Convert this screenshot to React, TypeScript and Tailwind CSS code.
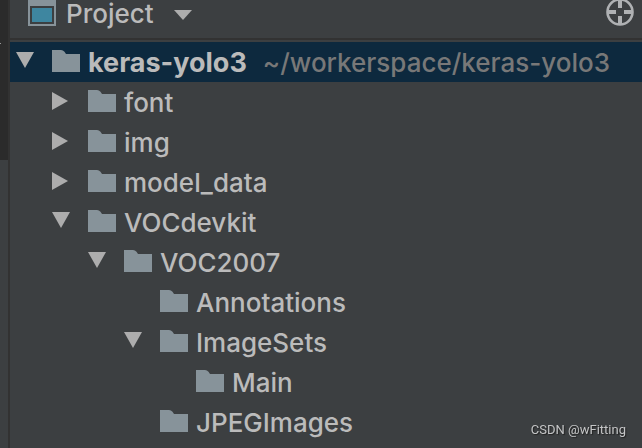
import { useState } from "react";

type Node = { name: string; path?: string; open?: boolean; children?: Node[] };

const tree: Node = {
  name: "keras-yolo3",
  path: "~/workerspace/keras-yolo3",
  open: true,
  children: [
    { name: "font", children: [] },
    { name: "img", children: [] },
    { name: "model_data", children: [] },
    {
      name: "VOCdevkit",
      open: true,
      children: [
        {
          name: "VOC2007",
          open: true,
          children: [
            { name: "Annotations" },
            { name: "ImageSets", open: true, children: [{ name: "Main" }] },
            { name: "JPEGImages" },
          ],
        },
      ],
    },
  ],
};

function Arrow({ open }: { open: boolean }) {
  return (
    <svg className="h-6 w-6" viewBox="0 0 24 24" fill="#adadad" aria-hidden="true">
      {open ? <path d="M0 4h18L9 20z" /> : <path d="M0 4v18l16-9z" />}
    </svg>
  );
}

function Folder() {
  return (
    <svg className="h-6 w-7 shrink-0" viewBox="0 0 28 24" fill="#87939a" aria-hidden="true">
      <path d="M0 2h9q2 0 3.500 1.800L14 6h14v18H0z" />
    </svg>
  );
}

function Branch({ node, root = false }: { node: Node; root?: boolean }) {
  const [open, setOpen] = useState(!!node.open);
  return (
    <li>
      <button
        type="button"
        aria-expanded={node.children ? open : undefined}
        onClick={() => setOpen(!open)}
        className={
          root
            ? "flex h-10 w-full items-center bg-[#0d293e] pb-1 pl-1.5 text-left whitespace-nowrap"
            : "flex h-10 w-full items-center pb-1 text-left whitespace-nowrap"
        }
      >
        <span className="w-9 shrink-0">{node.children && <Arrow open={open} />}</span>
        <Folder />
        <span className={root ? "ml-2 pt-1.5 text-[27px] leading-8 font-bold" : "ml-2 pt-1.5"}>{node.name}</span>
        {node.path && <span className="ml-4 pt-1.5 text-[#787878]">{node.path}</span>}
      </button>
      {open && node.children && (
        <ul className={root ? "pl-[42px]" : "pl-9"}>
          {node.children.map((child) => (
            <Branch key={child.name} node={child} />
          ))}
        </ul>
      )}
    </li>
  );
}

export default function App() {
  return (
    <div className="flex min-h-screen overflow-hidden bg-[#3c3f41] font-['Inter',sans-serif] text-[26px] leading-8 font-medium text-[#bbbbbb]">
      <aside className="w-2 shrink-0">
        <div className="h-40 bg-[#2b2b2b] pt-[43px]">
          <div className="h-px w-px bg-[#9a9a9a]" />
        </div>
      </aside>
      <main className="min-w-0 flex-1 border-l-2 border-[#323232]">
        <header className="flex h-10 items-start justify-between border-b-2 border-[#323232] pl-[18px] pr-2">
          <button type="button" className="flex items-start">
            <svg className="h-[26px] w-7" viewBox="0 0 28 26" aria-hidden="true">
              <path fill="#87939a" d="M0 0h28v26H0z" />
              <path fill="#3c3f41" d="M2 6h24v18H2z" />
              <path fill="#3e86a0" d="M4 8h20v14H4z" />
            </svg>
            <span className="ml-2.5 leading-7">Project</span>
            <svg className="ml-5 mt-2 h-3 w-[18px]" viewBox="0 0 18 12" fill="#adadad" aria-hidden="true">
              <path d="M0 2h18l-9 10z" />
            </svg>
          </button>
          <button type="button" aria-label="Select opened file">
            <svg className="h-[26px] w-7" viewBox="0 0 28 26" fill="none" stroke="#afb1b3" aria-hidden="true">
              <circle cx="14" cy="12" r="12.500" strokeWidth="2.600" />
              <path strokeWidth="4" d="M14 0v8M14 16v9M1 12h9M18 12h9" />
            </svg>
          </button>
        </header>
        <nav aria-label="Project files" className="pt-0.5">
          <ul>
            <Branch node={tree} root />
          </ul>
        </nav>
      </main>
      <p className="fixed right-4 bottom-2 font-['Roboto',sans-serif] text-[13px] leading-5 font-normal text-[#c4c5c6] [text-shadow:1px_1px_1px_#222]">
        CSDN @wFitting
      </p>
    </div>
  );
}
